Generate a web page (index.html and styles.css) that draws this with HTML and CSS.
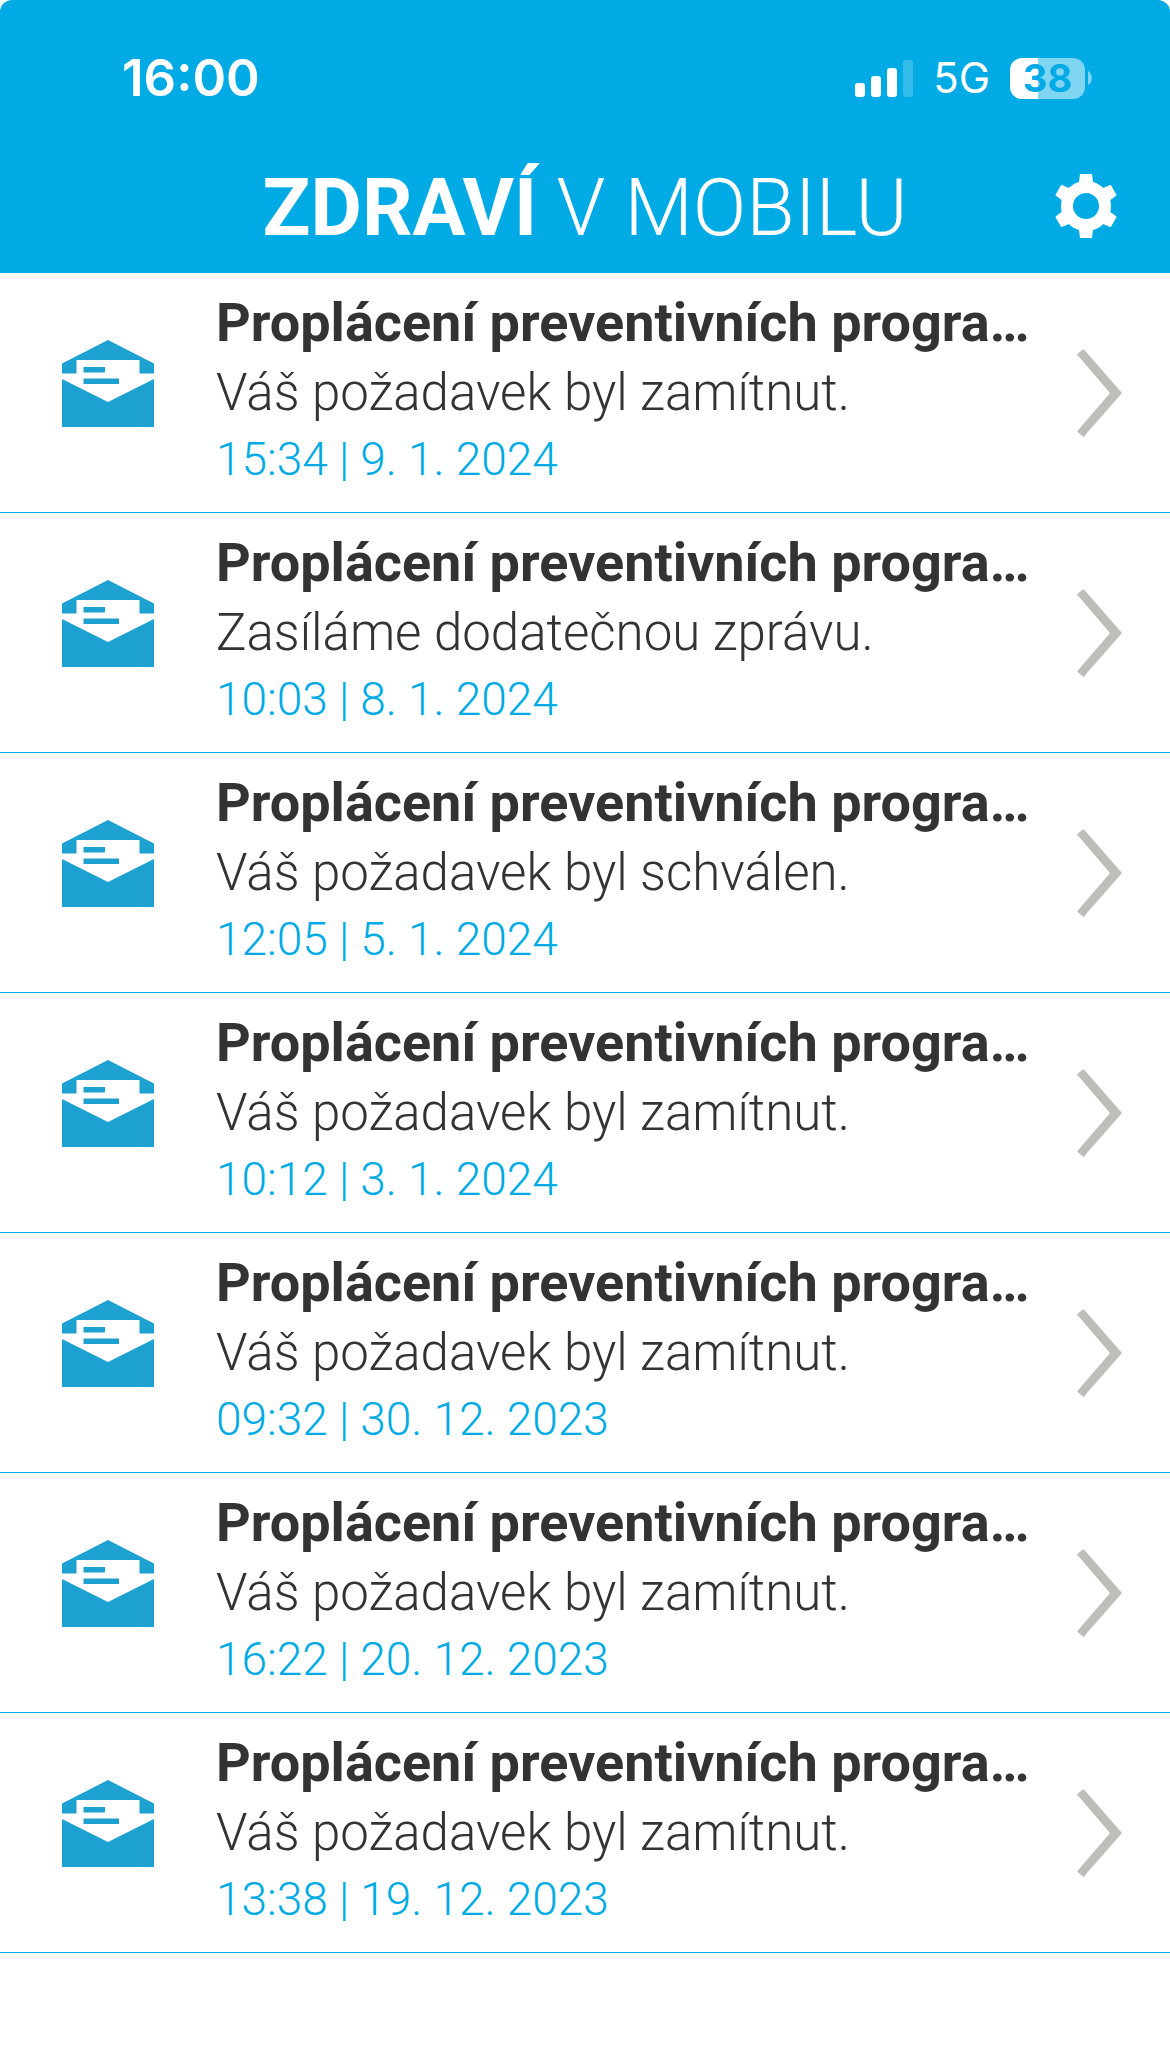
FILE: index.html
```html
<!DOCTYPE html>
<html lang="cs">
<head>
    <meta charset="UTF-8">
    <meta name="viewport" content="width=device-width, initial-scale=1.0">
    <title>Zdraví v mobilu</title>
    <link rel="stylesheet" href="styles.css">
</head>
<body>

    <!-- shared icons -->
    <svg class="icon-defs" aria-hidden="true">
        <symbol id="mail" viewBox="0 0 92 87">
            <path d="M46 0L92 23.500V33.500H77.500V20H14.500V33.500H0V23.500Z"/>
            <path d="M0 39L46 62L92 39V87H0Z"/>
            <path d="M21.500 27H43V32.500H21.500ZM21.500 38.500H57V44H21.500Z"/>
        </symbol>
        <symbol id="arrow" viewBox="0 0 45 88">
            <path d="M6.500 0L45 44L6.500 88L0 82.500L33 44L0 5.500Z"/>
        </symbol>
    </svg>

    <header class="header">
        <div class="status-bar">
            <span class="time">16:00</span>
            <div class="status-icons">
                <svg class="signal" viewBox="0 0 58 37" aria-hidden="true">
                    <rect x="0" y="23" width="10" height="14" rx="3"/>
                    <rect x="16" y="16" width="10" height="21" rx="3"/>
                    <rect x="32" y="8" width="10" height="29" rx="3"/>
                    <rect x="48" y="0" width="10" height="37" rx="3" opacity="0.2"/>
                </svg>
                <span class="network">5G</span>
                <div class="battery">
                    <span class="battery-level">38</span>
                    <svg class="battery-tip" viewBox="0 0 4 14" aria-hidden="true">
                        <path d="M0 0C5 3 5 11 0 14Z"/>
                    </svg>
                </div>
            </div>
        </div>
        <div class="title-bar">
            <h1 class="app-name"><strong>ZDRAVÍ</strong> V MOBILU</h1>
            <button class="settings" type="button" aria-label="Nastavení">
                <svg viewBox="-31 -32 62 64" aria-hidden="true">
                    <defs>
                        <path id="tooth" d="M-7.500 -20L-6 -32H6L7.500 -20Z"/>
                    </defs>
                    <circle r="19" fill="none" stroke="#fff" stroke-width="12"/>
                    <use href="#tooth"/>
                    <use href="#tooth" transform="rotate(60)"/>
                    <use href="#tooth" transform="rotate(120)"/>
                    <use href="#tooth" transform="rotate(180)"/>
                    <use href="#tooth" transform="rotate(240)"/>
                    <use href="#tooth" transform="rotate(300)"/>
                </svg>
            </button>
        </div>
    </header>

    <main>
        <ul class="messages">
            <li>
                <a class="message" href="#">
                    <svg class="mail-icon"><use href="#mail"/></svg>
                    <div class="message-text">
                        <h2>Proplácení preventivních progra…</h2>
                        <p>Váš požadavek byl zamítnut.</p>
                        <time>15:34 | 9. 1. 2024</time>
                    </div>
                    <svg class="arrow-icon"><use href="#arrow"/></svg>
                </a>
            </li>
            <li>
                <a class="message" href="#">
                    <svg class="mail-icon"><use href="#mail"/></svg>
                    <div class="message-text">
                        <h2>Proplácení preventivních progra…</h2>
                        <p>Zasíláme dodatečnou zprávu.</p>
                        <time>10:03 | 8. 1. 2024</time>
                    </div>
                    <svg class="arrow-icon"><use href="#arrow"/></svg>
                </a>
            </li>
            <li>
                <a class="message" href="#">
                    <svg class="mail-icon"><use href="#mail"/></svg>
                    <div class="message-text">
                        <h2>Proplácení preventivních progra…</h2>
                        <p>Váš požadavek byl schválen.</p>
                        <time>12:05 | 5. 1. 2024</time>
                    </div>
                    <svg class="arrow-icon"><use href="#arrow"/></svg>
                </a>
            </li>
            <li>
                <a class="message" href="#">
                    <svg class="mail-icon"><use href="#mail"/></svg>
                    <div class="message-text">
                        <h2>Proplácení preventivních progra…</h2>
                        <p>Váš požadavek byl zamítnut.</p>
                        <time>10:12 | 3. 1. 2024</time>
                    </div>
                    <svg class="arrow-icon"><use href="#arrow"/></svg>
                </a>
            </li>
            <li>
                <a class="message" href="#">
                    <svg class="mail-icon"><use href="#mail"/></svg>
                    <div class="message-text">
                        <h2>Proplácení preventivních progra…</h2>
                        <p>Váš požadavek byl zamítnut.</p>
                        <time>09:32 | 30. 12. 2023</time>
                    </div>
                    <svg class="arrow-icon"><use href="#arrow"/></svg>
                </a>
            </li>
            <li>
                <a class="message" href="#">
                    <svg class="mail-icon"><use href="#mail"/></svg>
                    <div class="message-text">
                        <h2>Proplácení preventivních progra…</h2>
                        <p>Váš požadavek byl zamítnut.</p>
                        <time>16:22 | 20. 12. 2023</time>
                    </div>
                    <svg class="arrow-icon"><use href="#arrow"/></svg>
                </a>
            </li>
            <li>
                <a class="message" href="#">
                    <svg class="mail-icon"><use href="#mail"/></svg>
                    <div class="message-text">
                        <h2>Proplácení preventivních progra…</h2>
                        <p>Váš požadavek byl zamítnut.</p>
                        <time>13:38 | 19. 12. 2023</time>
                    </div>
                    <svg class="arrow-icon"><use href="#arrow"/></svg>
                </a>
            </li>
        </ul>
    </main>

</body>
</html>
```
FILE: styles.css
```css
* {
    box-sizing: border-box;
}

body {
    margin: 0;
    background-color: #ffffff;
    color: #333333;
    font-family: Roboto, sans-serif;
}

.icon-defs {
    display: none;
}

/* header */
.header {
    background-color: #00abe5;
    color: #ffffff;
    border-radius: 12px 12px 0 0;
    padding-top: 48px;
    padding-bottom: 18px;
}

.status-bar {
    display: flex;
    align-items: center;
    justify-content: space-between;
    padding: 0 78px 0 122px;
    height: 60px;
    font-family: Inter, sans-serif;
}

.time {
    font-size: 51px;
    font-weight: 600;
    line-height: 60px;
}

.status-icons {
    display: flex;
    align-items: center;
    gap: 20px;
}

.signal {
    width: 58px;
    height: 37px;
    fill: #ffffff;
}

.network {
    font-size: 42px;
    line-height: 60px;
}

.battery {
    display: flex;
    align-items: center;
    gap: 3px;
}

.battery-level {
    width: 75px;
    height: 41px;
    border-radius: 12px;
    background: linear-gradient(to right, #ffffff 38%, #80d5f2 38%);
    color: #00abe5;
    font-size: 38px;
    font-weight: 700;
    line-height: 41px;
    text-align: center;
}

.battery-tip {
    width: 4px;
    height: 14px;
    fill: #80d5f2;
}

.title-bar {
    display: grid;
    grid-template-columns: 1fr auto 1fr;
    align-items: center;
    padding: 49px 53px 0;
}

.app-name {
    grid-column: 2;
    margin: 4px 0 0;
    font-size: 79px;
    font-weight: 300;
    line-height: 94px;
}

.app-name strong {
    font-weight: 700;
}

.settings {
    justify-self: end;
    width: 62px;
    height: 64px;
    padding: 0;
    border: none;
    background: none;
    cursor: pointer;
}

.settings svg {
    display: block;
    fill: #ffffff;
}

/* message list */
.messages {
    list-style: none;
    margin: 0;
    padding: 0;
}

.message {
    display: flex;
    align-items: center;
    min-height: 240px;
    padding: 0 48px 0 62px;
    border-bottom: 1px solid #00abe5;
    color: #333333;
    text-decoration: none;
}

.mail-icon {
    flex: none;
    width: 92px;
    height: 87px;
    margin: 0 62px 18px 0;
    fill: #1da1d0;
}

.message-text {
    flex: 1;
    min-width: 0;
    margin-right: 40px;
    padding-bottom: 8px;
}

.message-text h2,
.message-text p,
.message-text time {
    display: block;
    margin: 0;
    line-height: 70px;
    overflow: hidden;
    white-space: nowrap;
    text-overflow: ellipsis;
}

.message-text h2 {
    font-size: 54px;
    font-weight: 700;
}

.message-text p {
    font-size: 51px;
    font-weight: 300;
}

.message-text time {
    color: #00abe5;
    font-size: 46px;
    font-weight: 300;
    line-height: 62px;
}

.arrow-icon {
    flex: none;
    width: 45px;
    height: 88px;
    fill: #bdbdb9;
}
```
